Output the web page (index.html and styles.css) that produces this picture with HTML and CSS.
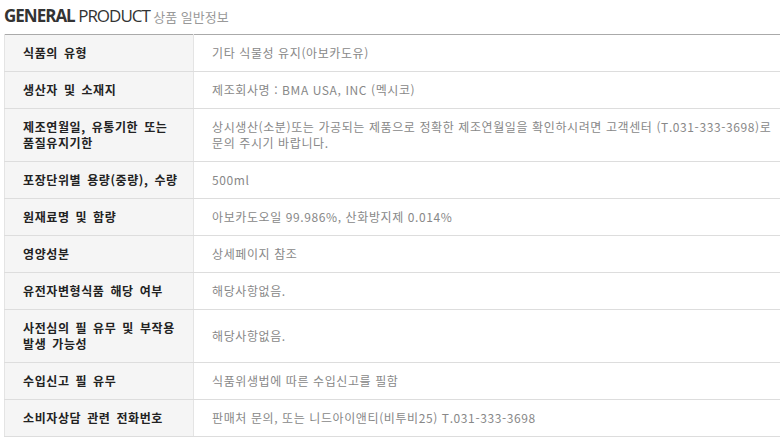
FILE: index.html
```html
<!DOCTYPE html>
<html lang="ko">
<head>
    <meta charset="UTF-8">
    <meta name="viewport" content="width=device-width, initial-scale=1.0">
    <title>상품 일반정보</title>
    <link rel="stylesheet" href="styles.css">
</head>
<body>
    <div class="info-box">
        <h2 class="info-title"><strong>GENERAL</strong> PRODUCT <span>상품 일반정보</span></h2>

        <table class="info-table">
            <colgroup>
                <col class="col-label">
                <col>
            </colgroup>
            <tr>
                <th>식품의 유형</th>
                <td>기타 식물성 유지(아보카도유)</td>
            </tr>
            <tr>
                <th>생산자 및 소재지</th>
                <td>제조회사명 : BMA USA, INC (멕시코)</td>
            </tr>
            <tr>
                <th>제조연월일, 유통기한 또는<br>품질유지기한</th>
                <td>상시생산(소분)또는 가공되는 제품으로 정확한 제조연월일을 확인하시려면 고객센터 (T.031-333-3698)로 문의 주시기 바랍니다.</td>
            </tr>
            <tr>
                <th>포장단위별 용량(중량), 수량</th>
                <td>500ml</td>
            </tr>
            <tr>
                <th>원재료명 및 함량</th>
                <td>아보카도오일 99.986%, 산화방지제 0.014%</td>
            </tr>
            <tr>
                <th>영양성분</th>
                <td>상세페이지 참조</td>
            </tr>
            <tr>
                <th>유전자변형식품 해당 여부</th>
                <td>해당사항없음.</td>
            </tr>
            <tr>
                <th>사전심의 필 유무 및 부작용<br>발생 가능성</th>
                <td>해당사항없음.</td>
            </tr>
            <tr>
                <th>수입신고 필 유무</th>
                <td>식품위생법에 따른 수입신고를 필함</td>
            </tr>
            <tr>
                <th>소비자상담 관련 전화번호</th>
                <td>판매처 문의, 또는 니드아이앤티(비투비25) T.031-333-3698</td>
            </tr>
        </table>
    </div>
</body>
</html>
```

FILE: styles.css
```css
* {
    margin: 0;
    padding: 0;
    box-sizing: border-box;
}

html, body {
    overflow: hidden;
}

body {
    background: white;
    font-family: "Noto Sans CJK KR", "Noto Sans", sans-serif;
    color: #333;
}

.info-box {
    padding-left: 4px;
    width: 812px;
}

.info-title {
    height: 34px;
    padding-top: 5px;
    font-family: "Open Sans", "Noto Sans CJK KR", sans-serif;
    font-size: 17px;
    font-weight: 400;
    letter-spacing: -1px;
    color: #333;
    line-height: 22px;
}

.info-title strong {
    font-weight: 700;
}

.info-title span {
    font-family: "Noto Sans CJK KR", sans-serif;
    font-size: 13px;
    letter-spacing: 0;
    color: #999;
}

.info-table {
    width: 100%;
    border-collapse: collapse;
    border-top: 1px solid #aaa;
    font-size: 12px;
    line-height: 16px;
}

.col-label {
    width: 189px;
}

.info-table th,
.info-table td {
    height: 36px;
    padding: 10px 18px;
    border-bottom: 1px solid #ddd;
    text-align: left;
    vertical-align: middle;
}

.info-table th {
    padding-right: 4px;
    background: #f5f5f5;
    border-left: 1px solid #e4e4e4;
    border-right: 1px solid #e4e4e4;
    color: #222;
    font-weight: 700;
    letter-spacing: 0.6px;
    word-spacing: 2px;
    white-space: nowrap;
}

.info-table td {
    color: #888;
    font-weight: 400;
    letter-spacing: 0.6px;
    word-break: keep-all;
}
```
